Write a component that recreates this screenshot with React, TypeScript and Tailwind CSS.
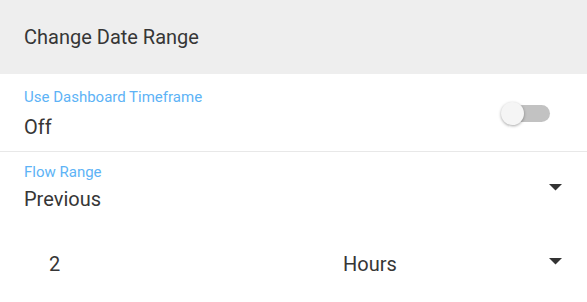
import React from 'react';

const font = { fontFamily: 'Roboto, "Noto Sans", sans-serif' };

function ArrowDown() {
  return (
    <svg width="13" height="7" viewBox="0 0 13 7" className="block shrink-0">
      <polygon points="0,0 13,0 6.5,6.5" fill="#333333" />
    </svg>
  );
}

function Toggle() {
  return (
    <div className="relative h-[24px] w-[49px]">
      <div className="absolute right-0 top-[3px] h-[17px] w-[37px] rounded-full bg-[#c2c2c2]" />
      <div className="absolute left-0 top-0 h-[23px] w-[23px] rounded-full bg-[#f5f5f5] shadow-[0_1px_3px_rgba(0,0,0,0.35)]" />
    </div>
  );
}

export default function App() {
  return (
    <div className="h-[302px] w-full bg-white text-[#363636]" style={font}>
      <div className="flex h-[74px] items-center bg-[#eeeeee] px-6 text-[20px]">Change Date Range</div>

      <div className="flex items-center justify-between border-b border-[#e8e8e8] pb-[12px] pl-6 pr-[37px] pt-[14px]">
        <div className="flex flex-col">
          <span className="text-[15px] leading-[18px] text-[#5db3f6]">Use Dashboard Timeframe</span>
          <span className="mt-[9px] text-[20px] leading-6">Off</span>
        </div>
        <Toggle />
      </div>

      <div className="flex items-center justify-between pl-6 pr-[25px] pt-[11px]">
        <div className="flex flex-col">
          <span className="text-[15px] leading-[18px] text-[#5db3f6]">Flow Range</span>
          <span className="mt-[6px] text-[20px] leading-6">Previous</span>
        </div>
        <ArrowDown />
      </div>

      <div className="mt-[41px] flex items-center pl-6 pr-[25px]">
        <div className="w-[319px] pl-[25px] text-[20px] leading-6">2</div>
        <div className="flex flex-1 items-center justify-between">
          <span className="text-[20px] leading-6">Hours</span>
          <div className="-mt-[6px]">
            <ArrowDown />
          </div>
        </div>
      </div>
    </div>
  );
}
